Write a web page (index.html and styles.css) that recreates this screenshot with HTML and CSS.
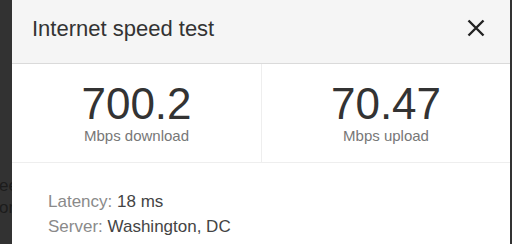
FILE: index.html
```html
<!DOCTYPE html>
<html>
<head>
<meta charset="utf-8">
<link rel="stylesheet" href="styles.css">
</head>
<body>
<div class="page">
  <div class="backdrop"><div class="backdrop-text"><div>eeds</div><div>orm</div></div></div>
  <div class="dialog">
    <div class="header">
      <div class="title">Internet speed test</div>
      <svg class="close" width="18" height="18" viewBox="0 0 18 18"><path d="M1.5 1.5 L16.5 16.5 M16.5 1.5 L1.5 16.5" stroke="#222" stroke-width="2.4" fill="none"/></svg>
    </div>
    <div class="stats">
      <div class="stat">
        <div class="value">700.2</div>
        <div class="unit">Mbps download</div>
      </div>
      <div class="stat">
        <div class="value">70.47</div>
        <div class="unit">Mbps upload</div>
      </div>
    </div>
    <div class="details">
      <div class="line"><span class="key">Latency:</span> <span class="val">18 ms</span></div>
      <div class="line"><span class="key">Server:</span> <span class="val">Washington, DC</span></div>
    </div>
  </div>
  <div class="edge"></div>
</div>
</body>
</html>
```
FILE: styles.css
```css
html, body {
  margin: 0;
  padding: 0;
  background: #323232;
  font-family: "Liberation Sans", Arial, sans-serif;
}
.page {
  display: flex;
  width: 512px;
  height: 244px;
  overflow: hidden;
}
.backdrop {
  width: 12px;
  flex: none;
  overflow: hidden;
  background: #323232;
}
.backdrop-text {
  padding-top: 175px;
  margin-left: -1px;
  white-space: nowrap;
  font-size: 17px;
  line-height: 22px;
  color: #1c1c1c;
}
.dialog {
  width: 498px;
  flex: none;
  background: #fff;
  display: flex;
  flex-direction: column;
}
.edge {
  width: 2px;
  flex: none;
  background: #323232;
}
.header {
  height: 63px;
  background: #f5f5f5;
  border-bottom: 1px solid #dadada;
  display: flex;
  align-items: flex-start;
  justify-content: space-between;
  padding: 0 25px 0 20px;
}
.title {
  padding-top: 16px;
  font-size: 22px;
  line-height: 26px;
  color: #333;
}
.close {
  margin-top: 19px;
}
.stats {
  display: grid;
  grid-template-columns: 249px 1fr;
  border-bottom: 1px solid #eeeeee;
}
.stat {
  text-align: center;
  padding: 18px 0 17px;
}
.stat + .stat {
  border-left: 1px solid #eeeeee;
}
.value {
  font-size: 44px;
  line-height: 44px;
  color: #333;
}
.unit {
  margin-top: 1px;
  font-size: 15px;
  line-height: 18px;
  color: #777;
}
.details {
  padding: 26px 0 0 36px;
  font-size: 17px;
  line-height: 25px;
}
.key {
  color: #8a8a8a;
}
.val {
  color: #444;
}
```
